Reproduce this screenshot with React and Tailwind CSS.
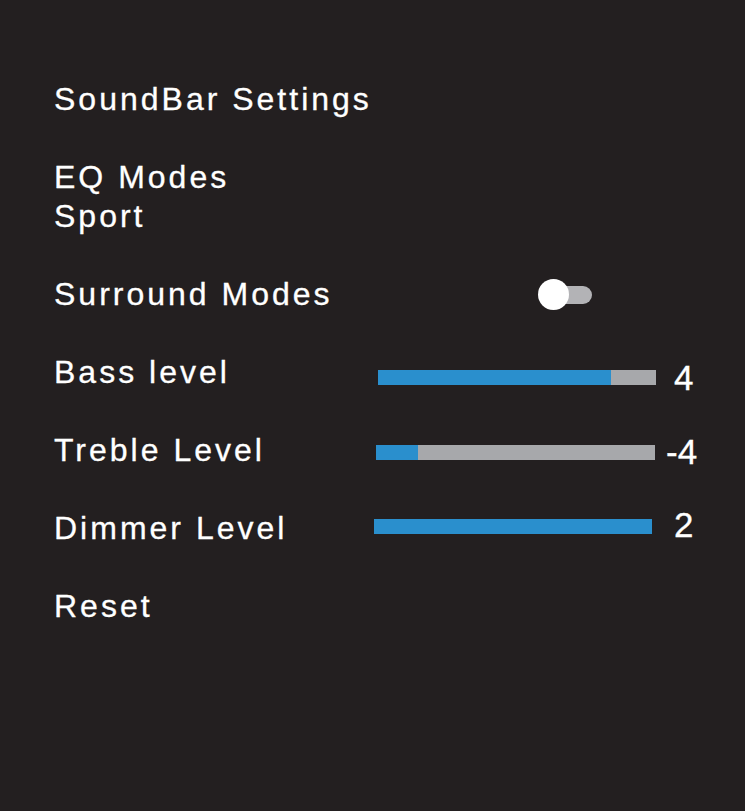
export default function App() {
  const font = { fontFamily: '"Liberation Sans", Arial, Helvetica, sans-serif' };
  return (
    <div
      className="w-[745px] h-[811px] bg-[#231f20] text-white pl-[54px] pt-[80px] flex flex-col gap-[39px] text-[32px] leading-[39px] tracking-[3px] [-webkit-text-stroke:0.3px_white]"
      style={font}
    >
      <div className="h-[39px]">SoundBar Settings</div>
      <div className="flex flex-col">
        <div className="h-[39px]">EQ Modes</div>
        <div className="h-[39px]">Sport</div>
      </div>
      <div className="flex items-center h-[39px]">
        <div className="w-[484px]">Surround Modes</div>
        <div className="relative w-[54px] h-[32px] flex items-center">
          <div className="absolute left-[15px] right-0 h-[18px] rounded-full bg-[#b3b3b6]" />
          <div className="absolute left-0 w-[31px] h-[31px] rounded-full bg-white" />
        </div>
      </div>
      <div className="flex items-start h-[39px]">
        <div className="w-[324px]">Bass level</div>
        <div className="w-[278px] h-[15px] mt-[17px] bg-[#a7a8ab] flex">
          <div className="w-[233px] h-full bg-[#2a8fcd]" />
        </div>
        <div className="ml-[18px] mt-[5px] text-[35px] tracking-[0px]">4</div>
      </div>
      <div className="flex items-start h-[39px]">
        <div className="w-[322px]">Treble Level</div>
        <div className="w-[279px] h-[15px] mt-[14px] bg-[#a7a8ab] flex">
          <div className="w-[42px] h-full bg-[#2a8fcd]" />
        </div>
        <div className="ml-[11px] mt-[1px] text-[35px] tracking-[0px]">-4</div>
      </div>
      <div className="flex items-start h-[39px]">
        <div className="w-[320px]">Dimmer Level</div>
        <div className="w-[278px] h-[15px] mt-[10px] bg-[#2a8fcd]" />
        <div className="ml-[22px] mt-[-4px] text-[35px] tracking-[0px]">2</div>
      </div>
      <div className="h-[39px]">Reset</div>
    </div>
  );
}
